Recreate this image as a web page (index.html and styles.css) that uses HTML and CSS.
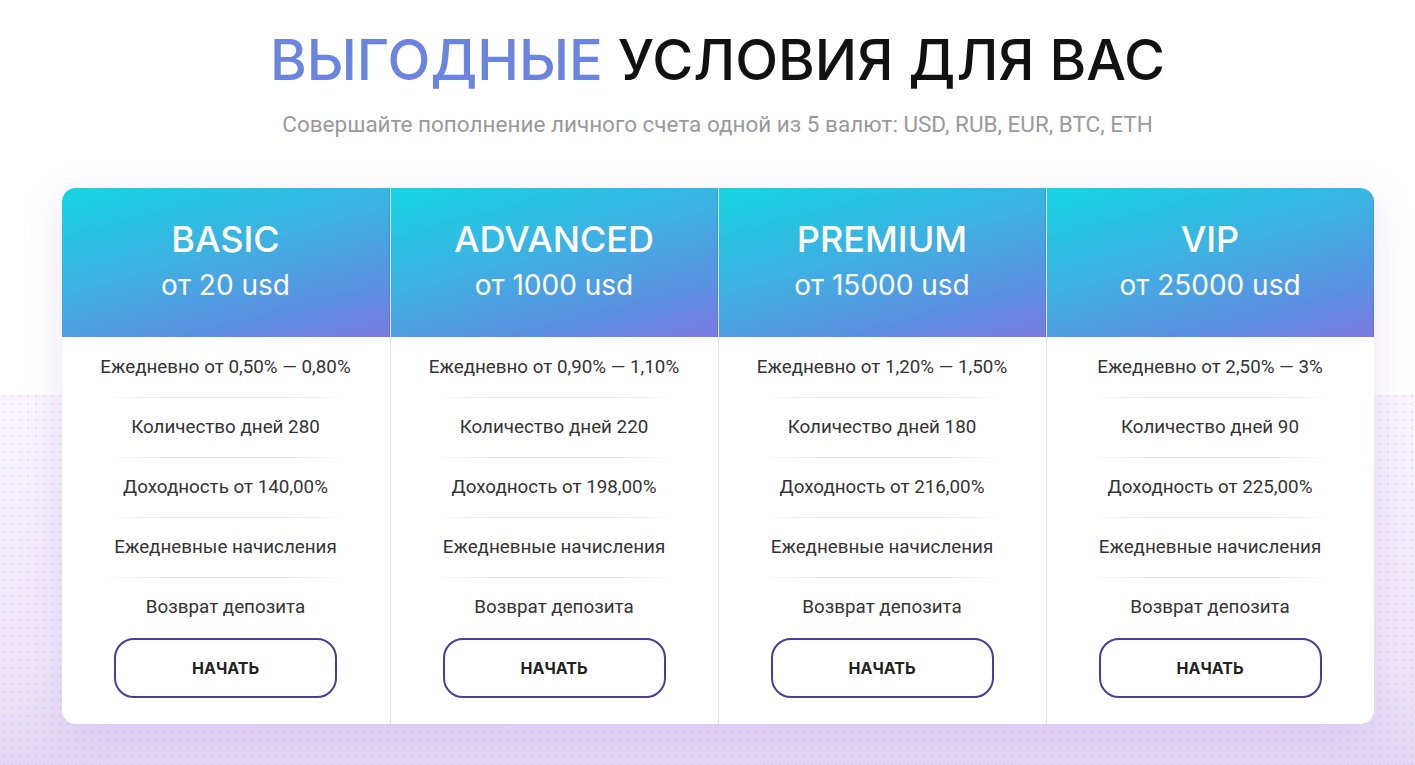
FILE: index.html
```html
<!DOCTYPE html>
<html lang="ru">
<head>
<meta charset="utf-8">
<title>Выгодные условия для вас</title>
<link rel="stylesheet" href="styles.css">
</head>
<body>
<main class="page">
  <h1 class="title"><span class="accent">ВЫГОДНЫЕ</span> УСЛОВИЯ ДЛЯ ВАС</h1>
  <p class="subtitle">Совершайте пополнение личного счета одной из 5 валют: USD, RUB, EUR, BTC, ETH</p>
  <section class="plans">
    <div class="plan">
      <div class="plan-head">
        <div class="plan-name">BASIC</div>
        <div class="plan-min">от 20 usd</div>
      </div>
      <ul class="plan-list">
        <li>Ежедневно от 0,50% — 0,80%</li>
        <li>Количество дней 280</li>
        <li>Доходность от 140,00%</li>
        <li>Ежедневные начисления</li>
        <li>Возврат депозита</li>
      </ul>
      <a class="btn" href="#">НАЧАТЬ</a>
    </div>
    <div class="plan">
      <div class="plan-head">
        <div class="plan-name">ADVANCED</div>
        <div class="plan-min">от 1000 usd</div>
      </div>
      <ul class="plan-list">
        <li>Ежедневно от 0,90% — 1,10%</li>
        <li>Количество дней 220</li>
        <li>Доходность от 198,00%</li>
        <li>Ежедневные начисления</li>
        <li>Возврат депозита</li>
      </ul>
      <a class="btn" href="#">НАЧАТЬ</a>
    </div>
    <div class="plan">
      <div class="plan-head">
        <div class="plan-name">PREMIUM</div>
        <div class="plan-min">от 15000 usd</div>
      </div>
      <ul class="plan-list">
        <li>Ежедневно от 1,20% — 1,50%</li>
        <li>Количество дней 180</li>
        <li>Доходность от 216,00%</li>
        <li>Ежедневные начисления</li>
        <li>Возврат депозита</li>
      </ul>
      <a class="btn" href="#">НАЧАТЬ</a>
    </div>
    <div class="plan">
      <div class="plan-head">
        <div class="plan-name">VIP</div>
        <div class="plan-min">от 25000 usd</div>
      </div>
      <ul class="plan-list">
        <li>Ежедневно от 2,50% — 3%</li>
        <li>Количество дней 90</li>
        <li>Доходность от 225,00%</li>
        <li>Ежедневные начисления</li>
        <li>Возврат депозита</li>
      </ul>
      <a class="btn" href="#">НАЧАТЬ</a>
    </div>
  </section>
</main>
</body>
</html>
```

FILE: styles.css
```css
html, body {
  margin: 0;
  padding: 0;
}

body {
  height: 765px;
  overflow: hidden;
  font-family: "Roboto", "Liberation Sans", sans-serif;
  background-color: #fff;
  background-image:
    linear-gradient(to bottom, #ffffff 0, #ffffff 395px, rgba(255,255,255,0) 395px),
    radial-gradient(circle, rgba(190,170,225,0.3) 1px, transparent 1.3px),
    linear-gradient(to bottom, #f9f6fd 395px, #efe7f9 660px, #e3d6f4 765px);
  background-size: 100% 100%, 8px 8px, 100% 100%;
  background-repeat: no-repeat, repeat, no-repeat;
}

.page {
  padding-left: 20px;
  display: flex;
  flex-direction: column;
  align-items: center;
}

.title {
  margin: 22px 0 0;
  font-family: "Inter", "Noto Sans", sans-serif;
  font-weight: 500;
  font-size: 56px;
  line-height: 76px;
  color: #111;
  letter-spacing: 0;
}

.accent {
  color: #6a84e0;
}

.subtitle {
  margin: 11px 0 0;
  font-size: 22.5px;
  line-height: 30px;
  color: #9a9a9a;
}

.plans {
  margin-top: 49px;
  width: 1312px;
  display: grid;
  grid-template-columns: repeat(4, 1fr);
  background: #fff;
  border-radius: 14px;
  overflow: hidden;
  box-shadow: 0 12px 40px rgba(170, 130, 230, 0.22);
}

.plan {
  display: flex;
  flex-direction: column;
  align-items: center;
  border-left: 1px solid #e2e2e2;
  padding-bottom: 26px;
}

.plan:first-child {
  border-left: none;
}

.plan-head {
  align-self: stretch;
  height: 149px;
  box-sizing: border-box;
  padding-bottom: 4px;
  display: flex;
  flex-direction: column;
  align-items: center;
  justify-content: center;
  color: #fff;
  background: linear-gradient(165deg, #14d6e2 0%, #3fb0e2 45%, #5e8de2 80%, #7c78e0 100%);
  font-family: "Inter", "Noto Sans", sans-serif;
  box-shadow: inset -1px 0 0 rgba(80, 100, 200, 0.35);
}

.plan-name {
  font-size: 36px;
  font-weight: 500;
  line-height: 44px;
}

.plan-min {
  margin-top: 4px;
  font-size: 28px;
  font-weight: 400;
  line-height: 40px;
}

.plan-list {
  list-style: none;
  margin: 0;
  padding: 0;
  align-self: stretch;
}

.plan-list li {
  height: 60px;
  display: flex;
  align-items: center;
  justify-content: center;
  font-size: 18.8px;
  color: #333;
  position: relative;
}

.plan-list li + li::before {
  content: "";
  position: absolute;
  top: 0;
  left: 40px;
  right: 40px;
  height: 1px;
  background: linear-gradient(to right, rgba(225,225,225,0), #e6e6e6 25%, #e6e6e6 75%, rgba(225,225,225,0));
}

.btn {
  margin-top: 1px;
  width: 223px;
  height: 60px;
  box-sizing: border-box;
  border: 2px solid #4a3b9e;
  border-radius: 20px;
  display: flex;
  align-items: center;
  justify-content: center;
  font-family: "Inter", "Noto Sans", sans-serif;
  font-weight: 700;
  font-size: 16px;
  color: #222;
  text-decoration: none;
}
```
